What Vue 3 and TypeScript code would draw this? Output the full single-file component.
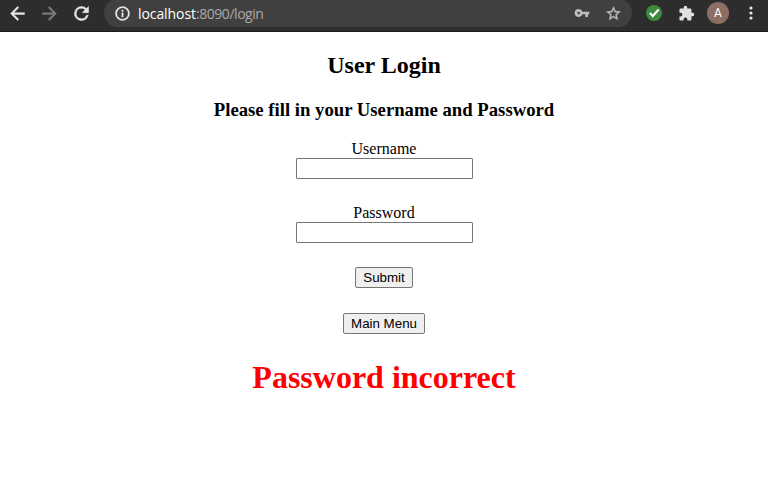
<script setup lang="ts">
import { ref } from 'vue'

const username = ref<string>('')
const password = ref<string>('')
const error = ref<string>('Password incorrect')
</script>

<template>
  <div class="window">
    <header class="toolbar">
      <svg class="nav" viewBox="0 0 24 24"><path fill="#e8e8e8" stroke="#e8e8e8" stroke-width=".5" d="M20 11H7.83l5.59-5.59L12 4l-8 8 8 8 1.41-1.41L7.83 13H20v-2z" /></svg>
      <svg class="nav" viewBox="0 0 24 24"><path fill="#7b7b7b" stroke="#7b7b7b" stroke-width=".5" d="M12 4l-1.41 1.41L16.17 11H4v2h12.17l-5.58 5.59L12 20l8-8z" /></svg>
      <svg class="nav" viewBox="0 0 24 24"><path fill="#e8e8e8" stroke="#e8e8e8" stroke-width=".6" d="M17.65 6.35A7.958 7.958 0 0 0 12 4a8 8 0 1 0 7.73 10h-2.08A6 6 0 1 1 12 6c1.66 0 3.14.69 4.22 1.78L13 11h7V4l-2.35 2.35z" /></svg>
      <div class="address">
        <svg class="info" viewBox="0 0 24 24"><path fill="#ececec" stroke="#ececec" stroke-width=".5" d="M11 7h2v2h-2zm0 4h2v6h-2zm1-9a10 10 0 1 0 0 20 10 10 0 0 0 0-20zm0 18a8 8 0 1 1 0-16 8 8 0 0 1 0 16z" /></svg>
        <span class="url"><span class="host">localhost</span>:8090/login</span>
        <svg class="key" viewBox="0 0 24 24"><path fill="#bdbdbd" d="M12.65 10A5.99 5.99 0 0 0 7 6a6 6 0 1 0 5.65 8H17v4h4v-4h2v-4H12.65zM7 14a2 2 0 1 1 0-4 2 2 0 0 1 0 4z" /></svg>
        <svg class="star" viewBox="0 0 24 24"><path fill="#bdbdbd" stroke="#bdbdbd" stroke-width=".5" d="M22 9.24l-7.19-.62L12 2 9.19 8.63 2 9.24l5.46 4.73L5.82 21 12 17.27 18.18 21l-1.63-7.03L22 9.24zM12 15.4l-3.76 2.27 1-4.28-3.32-2.88 4.38-.38L12 6.1l1.71 4.04 4.38.38-3.32 2.88 1 4.28L12 15.4z" /></svg>
      </div>
      <svg class="check" viewBox="0 0 16 16"><circle cx="8" cy="8" r="8" fill="#3f8a3f" /><path d="M4 8l2.8 3.2 5.8-6.6" fill="none" stroke="#fff" stroke-width="2.2" /></svg>
      <svg class="puzzle" viewBox="0 0 24 24"><path fill="#e0e0e0" d="M20.5 11H19V7a2 2 0 0 0-2-2h-4V3.5a2.5 2.5 0 0 0-5 0V5H4a2 2 0 0 0-1.99 2v3.8H3.5a2.7 2.7 0 0 1 0 5.4H2V20a2 2 0 0 0 2 2h3.8v-1.5a2.7 2.7 0 0 1 5.4 0V22H17a2 2 0 0 0 2-2v-4h1.5a2.5 2.5 0 0 0 0-5z" /></svg>
      <div class="avatar">A</div>
      <svg class="dots" viewBox="0 0 4 14"><g fill="#e8e8e8"><circle cx="2" cy="2" r="1.6" /><circle cx="2" cy="7" r="1.6" /><circle cx="2" cy="12" r="1.6" /></g></svg>
    </header>
    <main class="page">
      <h2>User Login</h2>
      <h3>Please fill in your Username and Password</h3>
      <form @submit.prevent>
        <label for="username">Username</label>
        <input id="username" v-model="username" type="text" />
        <label for="password">Password</label>
        <input id="password" v-model="password" type="password" />
        <button class="submit" type="submit">Submit</button>
        <button class="menu" type="button">Main Menu</button>
      </form>
      <h1>{{ error }}</h1>
    </main>
  </div>
</template>

<style>
body {
  margin: 0;
  background: #fff;
}
</style>

<style scoped>
.window {
  height: 497px;
  overflow: hidden;
  font-family: "Liberation Serif", "Times New Roman", serif;
  color: #000;
}
.toolbar {
  box-sizing: border-box;
  height: 32px;
  display: flex;
  align-items: center;
  padding: 0 15px 5px 7px;
  background: #2d2d2d;
  border-bottom: 1px solid #1c1c1c;
}
.toolbar svg {
  display: block;
  flex: none;
}
.nav {
  width: 21px;
  height: 21px;
  margin-right: 11px;
}
.address {
  box-sizing: border-box;
  width: 528px;
  height: 28px;
  flex: none;
  display: flex;
  align-items: center;
  padding: 0 9.5px;
  margin-left: 1px;
  border-radius: 14px;
  background: #404040;
}
.info {
  width: 17px;
  height: 17px;
  margin-right: 7.5px;
}
.url {
  flex: 1;
  padding-top: 1px;
  font: 14px/20px "Open Sans", "Noto Sans", sans-serif;
  letter-spacing: -.45px;
  color: #a9a9a9;
}
.host {
  color: #fff;
  letter-spacing: -.08px;
}
.key {
  width: 16px;
  height: 16px;
  margin-right: 15px;
}
.star {
  width: 17px;
  height: 17px;
  margin-right: .5px;
}
.check {
  width: 16px;
  height: 16px;
  margin-left: 14px;
}
.puzzle {
  width: 17px;
  height: 17px;
  margin-left: 16px;
}
.avatar {
  width: 22px;
  height: 22px;
  flex: none;
  margin-left: 12px;
  border-radius: 50%;
  background: #8d6e63;
  color: #fff;
  font: 12px/22px Roboto, sans-serif;
  text-align: center;
}
.dots {
  width: 4px;
  height: 14px;
  margin-left: 19.5px;
}
.page {
  padding-top: 20px;
  text-align: center;
}
h2 {
  margin: 0 0 20px;
  font-size: 24px;
  line-height: 27px;
}
h3 {
  margin: 0 0 20px;
  font-size: 18.72px;
  line-height: 21px;
}
form {
  display: flex;
  flex-direction: column;
  align-items: center;
}
label {
  font-size: 16px;
  line-height: 18px;
}
input {
  box-sizing: border-box;
  width: 177px;
  height: 21px;
  margin: 0 0 25px 1px;
  padding: 1px 2px;
  border: 1px solid #767676;
  border-radius: 1px;
  background: #fff;
}
button {
  box-sizing: border-box;
  height: 21px;
  padding: 0;
  border: 1px solid #767676;
  border-radius: 2px;
  background: #efefef;
  color: #000;
  font: 13.333px/19px "Liberation Sans", Arial, sans-serif;
}
.submit {
  width: 58px;
  margin: -1px 0 25px;
}
.menu {
  width: 82px;
}
h1 {
  margin: 25px 0 0;
  font-size: 32px;
  line-height: 37px;
  color: #f00;
}
</style>
